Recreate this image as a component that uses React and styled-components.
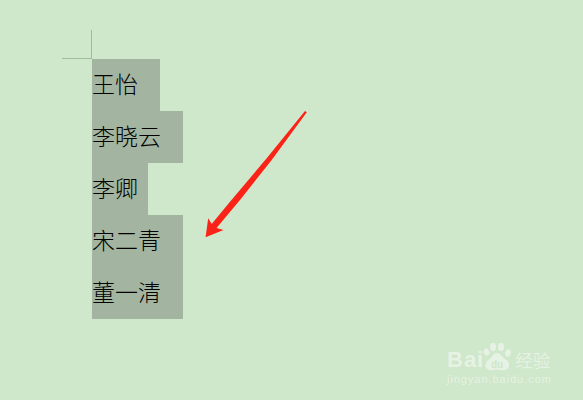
import React from "react";
import styled, { createGlobalStyle } from "styled-components";

const names = [
  { text: "王怡", width: 68 },
  { text: "李晓云", width: 91 },
  { text: "李卿", width: 56 },
  { text: "宋二青", width: 91 },
  { text: "董一清", width: 91 },
];

function App() {
  return (
    <Page>
      <GlobalStyle />
      <CropMark />
      <NameList>
        {names.map((n) => (
          <NameRow key={n.text} $width={n.width}>
            {n.text}
          </NameRow>
        ))}
      </NameList>
      <Arrow viewBox="0 0 112 138" aria-hidden="true">
        <path
          d="M105 6 L106.8 7.300 L71.700 55 L40 95 L16.500 123 L23.500 125 L5.600 132.200 L8.200 113.200 L11.700 119 L30 96.700 L66.700 53.300 Z"
          fill="#fb2317"
        />
      </Arrow>
      <Watermark>
        <LogoRow>
          <LogoWord>Bai</LogoWord>
          <Paw viewBox="0 0 30 30" aria-hidden="true">
            <ellipse cx="3.500" cy="10" rx="2.800" ry="3.800" transform="rotate(-18 3.500 10)" />
            <ellipse cx="10" cy="5" rx="3" ry="4.300" />
            <ellipse cx="18" cy="5" rx="3" ry="4.300" />
            <ellipse cx="25" cy="11" rx="2.800" ry="3.800" transform="rotate(18 25 11)" />
            <path d="M14 11 C18 11 19 15 22 17 C26 19 26.500 22 26 24.500 C25 28 21 29 17.500 28 C15 27.300 13 27.300 10.500 28 C6 29 3 27 2.500 24 C2 21 4 18.500 6.500 17 C9.500 15 10 11 14 11 Z" />
            <text x="14" y="25.500" textAnchor="middle">du</text>
          </Paw>
          <LogoCjk>经验</LogoCjk>
        </LogoRow>
        <LogoUrl>jingyan.baidu.com</LogoUrl>
      </Watermark>
    </Page>
  );
}

const GlobalStyle = createGlobalStyle`
  html, body {
    margin: 0;
    padding: 0;
    background: #cfe7ca;
  }
`;

const Page = styled.div`
  position: relative;
  width: 583px;
  height: 400px;
  box-sizing: border-box;
  padding: 30px 0 0 62px;
  overflow: hidden;
  background: #cfe7ca;
`;

const CropMark = styled.div`
  box-sizing: border-box;
  width: 30px;
  height: 29px;
  border-right: 1px solid #a3b9a0;
  border-bottom: 1px solid #a3b9a0;
`;

const NameList = styled.div`
  display: flex;
  flex-direction: column;
  margin-left: 30px;
`;

const NameRow = styled.div`
  width: ${(p) => p.$width}px;
  height: 52px;
  line-height: 48px;
  font-family: "Noto Sans CJK SC", sans-serif;
  font-size: 23px;
  font-weight: 300;
  color: #000;
  white-space: nowrap;
  background: #a3b5a0;
`;

const Arrow = styled.svg`
  position: absolute;
  left: 200px;
  top: 105px;
  width: 112px;
  height: 138px;
`;

const Watermark = styled.div`
  position: absolute;
  left: 447px;
  top: 342px;
  width: 110px;
  color: #e6f2e3;
`;

const LogoRow = styled.div`
  display: flex;
  align-items: flex-end;
  height: 30px;
`;

const LogoWord = styled.span`
  margin-bottom: 2px;
  font-family: "Liberation Sans", sans-serif;
  font-size: 22px;
  font-weight: 700;
  line-height: 20px;
  letter-spacing: 1px;
`;

const Paw = styled.svg`
  flex: none;
  width: 30px;
  height: 30px;
  margin-left: -1px;
  fill: #e6f2e3;

  text {
    font-family: "Liberation Sans", sans-serif;
    font-size: 10px;
    font-weight: 700;
    fill: #cfe7ca;
  }
`;

const LogoCjk = styled.span`
  margin: 0 0 2px 2px;
  font-family: "Noto Sans CJK SC", sans-serif;
  font-size: 17.500px;
  line-height: 20px;
  white-space: nowrap;
`;

const LogoUrl = styled.div`
  margin-top: 1px;
  font-family: "Liberation Sans", sans-serif;
  font-size: 11px;
  line-height: 13px;
  letter-spacing: 0.95px;
  white-space: nowrap;
`;

export default App;
